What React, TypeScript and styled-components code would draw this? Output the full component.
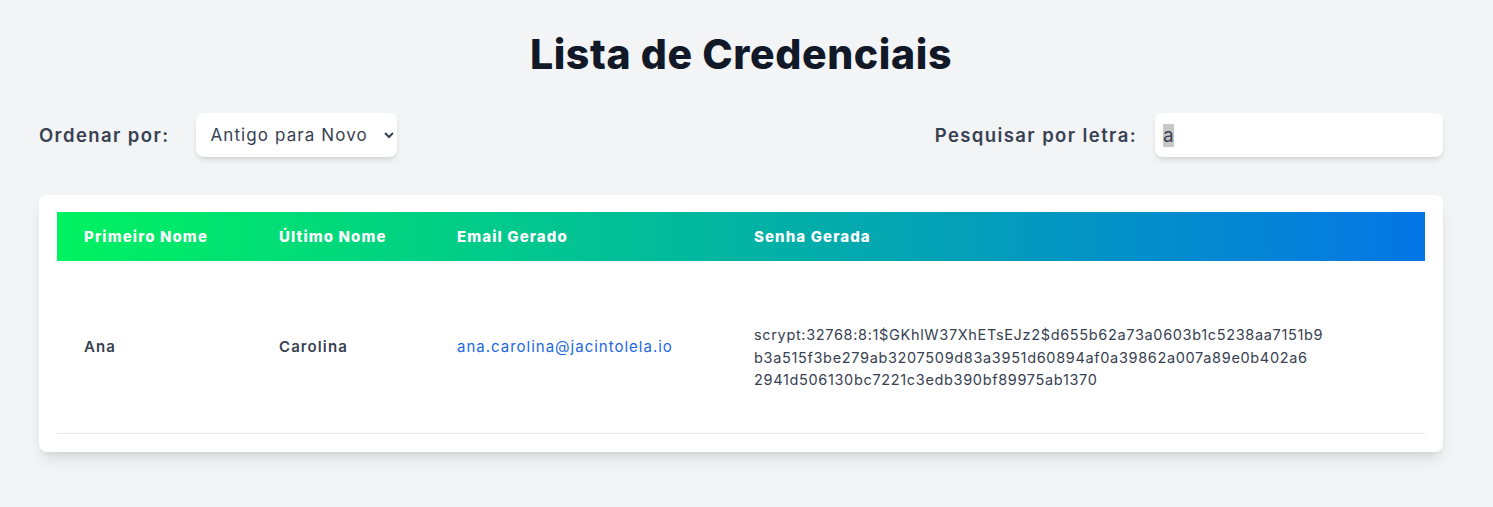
import React, { useEffect, useRef } from "react";
import styled, { createGlobalStyle } from "styled-components";

const GlobalStyle = createGlobalStyle`
  html, body { margin: 0; padding: 0; background: #f3f4f6; }
  body { font-family: Inter, "Noto Sans", sans-serif; color: #374151; }
  * { box-sizing: border-box; }
`;

const Page = styled.div`
  padding: 26px 50px 40px 39px;
`;

const Title = styled.h1`
  margin: 0;
  text-align: center;
  font-family: Inter, sans-serif;
  font-weight: 800;
  font-size: 41px;
  line-height: 56px;
  letter-spacing: 0.6px;
  color: #111827;
`;

const Controls = styled.div`
  display: flex;
  justify-content: space-between;
  align-items: center;
  margin-top: 31px;
`;

const Field = styled.div<{ $gap: number }>`
  display: flex;
  align-items: center;
  gap: ${(p) => p.$gap}px;
`;

const Label = styled.label`
  font-size: 18.5px;
  font-weight: 600;
  letter-spacing: 1.4px;
  color: #374151;
`;

const Select = styled.select`
  height: 44px;
  width: 201px;
  border: none;
  border-radius: 8px;
  background: #fff;
  padding: 0 10px 0 10px;
  font-family: Inter, sans-serif;
  font-size: 17px;
  letter-spacing: 1.1px;
  color: #374151;
  box-shadow: 0 4px 6px -1px rgba(0, 0, 0, 0.1), 0 2px 4px -2px rgba(0, 0, 0, 0.1);
  outline: none;
`;

const Search = styled.input`
  height: 44px;
  width: 288px;
  border: none;
  border-radius: 8px;
  background: #fff;
  padding: 0 8px;
  font-family: Inter, sans-serif;
  font-size: 19px;
  line-height: 27px;
  color: #374151;
  box-shadow: 0 4px 6px -1px rgba(0, 0, 0, 0.1), 0 2px 4px -2px rgba(0, 0, 0, 0.1);
  outline: none;
  caret-color: transparent;
  &::selection { background: #c8c8c8; color: #374151; }
`;

const Card = styled.div`
  margin-top: 38px;
  background: #fff;
  border-radius: 8px;
  padding: 17px 18px 18px;
  box-shadow: 0 10px 15px -3px rgba(0, 0, 0, 0.1), 0 4px 6px -4px rgba(0, 0, 0, 0.1);
`;

const Table = styled.table`
  width: 100%;
  border-collapse: collapse;
  table-layout: fixed;
`;

const HeadRow = styled.tr`
  background: linear-gradient(90deg, #00f260 0%, #0575e6 100%);
`;

const Th = styled.th<{ $w?: number }>`
  width: ${(p) => (p.$w ? `${p.$w}px` : "auto")};
  height: 49px;
  padding: 0 27px;
  text-align: left;
  font-size: 15px;
  font-weight: 800;
  color: #fff;
  letter-spacing: 1.1px;
  white-space: nowrap;
`;

const BodyRow = styled.tr`
  border-bottom: 1px solid #e5e7eb;
`;

const Td = styled.td<{ $bold?: boolean; $shift?: number }>`
  height: 172px;
  padding: ${(p) => (p.$shift ? `${p.$shift}px` : "0")} 27px 0;
  vertical-align: middle;
  font-size: 15px;
  font-weight: ${(p) => (p.$bold ? 600 : 400)};
  letter-spacing: ${(p) => (p.$bold ? "1.1px" : "1px")};
  color: #374151;
`;

const Email = styled.span`
  color: #2368df;
`;

const HashLine = styled.span`
  display: block;
  line-height: 22.5px;
  font-size: 14.5px;
  letter-spacing: 0.66px;
  white-space: nowrap;
`;

export default function App() {
  const ref = useRef<HTMLInputElement>(null);
  useEffect(() => {
    const el = ref.current;
    if (el) {
      el.focus();
      el.setSelectionRange(0, 1);
    }
  }, []);
  return (
    <>
      <GlobalStyle />
      <Page>
        <Title>Lista de Credenciais</Title>
        <Controls>
          <Field $gap={27}>
            <Label htmlFor="ordem">Ordenar por:</Label>
            <Select id="ordem" defaultValue="antigo">
              <option value="antigo">Antigo para Novo</option>
              <option value="novo">Novo para Antigo</option>
            </Select>
          </Field>
          <Field $gap={18}>
            <Label htmlFor="busca">Pesquisar por letra:</Label>
            <Search id="busca" ref={ref} defaultValue="a" />
          </Field>
        </Controls>
        <Card>
          <Table>
            <thead>
              <HeadRow>
                <Th $w={195}>Primeiro Nome</Th>
                <Th $w={178}>Último Nome</Th>
                <Th $w={297}>Email Gerado</Th>
                <Th>Senha Gerada</Th>
              </HeadRow>
            </thead>
            <tbody>
              <BodyRow>
                <Td $bold>Ana</Td>
                <Td $bold>Carolina</Td>
                <Td>
                  <Email>ana.carolina@jacintolela.io</Email>
                </Td>
                <Td $shift={22}>
                  <HashLine>scrypt:32768:8:1$GKhlW37XhETsEJz2$d655b62a73a0603b1c5238aa7151b9</HashLine>
                  <HashLine>b3a515f3be279ab3207509d83a3951d60894af0a39862a007a89e0b402a6</HashLine>
                  <HashLine>2941d506130bc7221c3edb390bf89975ab1370</HashLine>
                </Td>
              </BodyRow>
            </tbody>
          </Table>
        </Card>
      </Page>
    </>
  );
}
